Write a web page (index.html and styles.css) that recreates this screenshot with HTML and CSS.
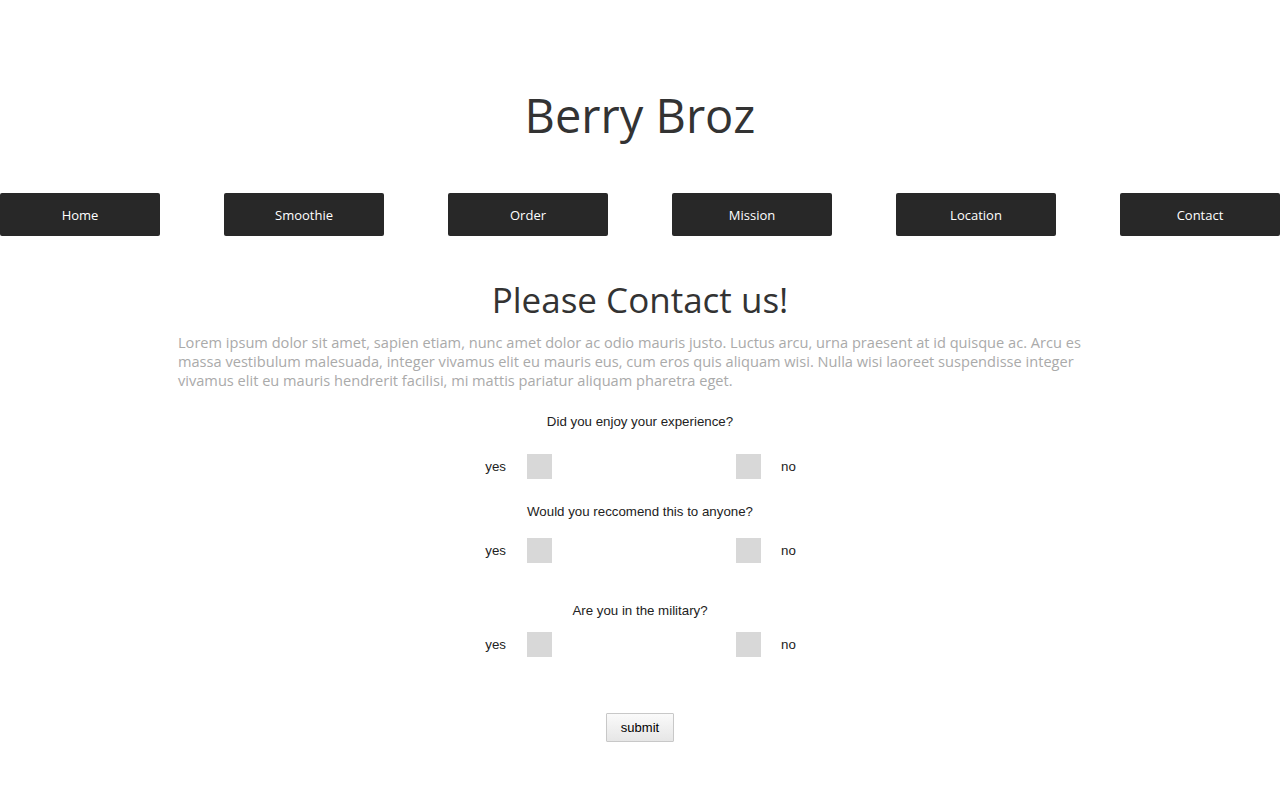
FILE: index.html
```html
<!DOCTYPE html>
<html>
<head>
<meta charset="utf-8">
<title>Berry Broz</title>
<link rel="stylesheet" href="styles.css">
</head>
<body>
<header class="header">
  <h1 class="site-title">Berry Broz</h1>
</header>
<nav class="nav">
  <a class="nav-btn" href="#">Home</a>
  <a class="nav-btn" href="#">Smoothie</a>
  <a class="nav-btn" href="#">Order</a>
  <a class="nav-btn" href="#">Mission</a>
  <a class="nav-btn" href="#">Location</a>
  <a class="nav-btn" href="#">Contact</a>
</nav>
<main class="content">
  <h2 class="page-title">Please Contact us!</h2>
  <p class="intro">Lorem ipsum dolor sit amet, sapien etiam, nunc amet dolor ac odio mauris justo. Luctus arcu, urna praesent at id quisque ac. Arcu es massa vestibulum malesuada, integer vivamus elit eu mauris eus, cum eros quis aliquam wisi. Nulla wisi laoreet suspendisse integer vivamus elit eu mauris hendrerit facilisi, mi mattis pariatur aliquam pharetra eget.</p>
  <form class="survey">
    <p class="question q1">Did you enjoy your experience?</p>
    <div class="answers a1">
      <span class="label">yes</span>
      <span class="box"></span>
      <span class="spacer"></span>
      <span class="box"></span>
      <span class="label">no</span>
    </div>
    <p class="question q2">Would you reccomend this to anyone?</p>
    <div class="answers a2">
      <span class="label">yes</span>
      <span class="box"></span>
      <span class="spacer"></span>
      <span class="box"></span>
      <span class="label">no</span>
    </div>
    <p class="question q3">Are you in the military?</p>
    <div class="answers a3">
      <span class="label">yes</span>
      <span class="box"></span>
      <span class="spacer"></span>
      <span class="box"></span>
      <span class="label">no</span>
    </div>
    <div class="submit-row">
      <button type="button" class="submit">submit</button>
    </div>
  </form>
</main>
</body>
</html>
```
FILE: styles.css
```css
html, body {
  margin: 0;
  padding: 0;
  background: #ffffff;
}

body {
  font-family: "Open Sans", "Liberation Sans", sans-serif;
  color: #333333;
}

.header {
  padding-top: 80px;
  height: 193px;
  box-sizing: border-box;
}

.site-title {
  margin: 0;
  text-align: center;
  font-weight: 400;
  font-size: 47px;
  line-height: 70px;
  color: #333333;
}

.nav {
  display: flex;
  justify-content: space-between;
  height: 43px;
}

.nav-btn {
  display: flex;
  align-items: center;
  justify-content: center;
  width: 160px;
  height: 43px;
  background: #282828;
  color: #ffffff;
  border-radius: 2px;
  text-decoration: none;
  font-size: 13px;
  padding-top: 1px;
  box-sizing: border-box;
}

.content {
  width: 924px;
  margin: 0 auto;
}

.page-title {
  margin: 40px 0 0;
  text-align: center;
  font-weight: 400;
  font-size: 35px;
  line-height: 48px;
  color: #333333;
}

.intro {
  margin: 9px 0 0;
  font-size: 14.6px;
  line-height: 19px;
  color: #aaaaaa;
}

.survey {
  font-family: "Liberation Sans", Arial, sans-serif;
  font-size: 13.3px;
  color: #222222;
}

.question {
  margin: 0;
  text-align: center;
  line-height: 16px;
}

.q1 { margin-top: 24px; }
.q2 { margin-top: 25px; }
.q3 { margin-top: 40px; }

.answers {
  display: flex;
  justify-content: center;
  align-items: center;
  height: 25px;
  padding-left: 7px;
}

.a1 { margin-top: 24px; }
.a2 { margin-top: 18px; }
.a3 { margin-top: 13px; }

.label {
  width: 26px;
  text-align: left;
}

.answers .label:first-child {
  text-align: right;
  margin-right: 21px;
}

.answers .label:last-child {
  margin-left: 20px;
}

.box {
  width: 25px;
  height: 25px;
  background: #d8d8d8;
}

.spacer {
  width: 184px;
}

.submit-row {
  display: flex;
  justify-content: center;
  margin-top: 56px;
}

.submit {
  width: 68px;
  height: 29px;
  font-family: "Liberation Sans", Arial, sans-serif;
  font-size: 13px;
  color: #000000;
  background: linear-gradient(#fafafa, #e6e6e6);
  border: 1px solid #c8c8c8;
  border-radius: 1px;
  padding: 0;
}
```
